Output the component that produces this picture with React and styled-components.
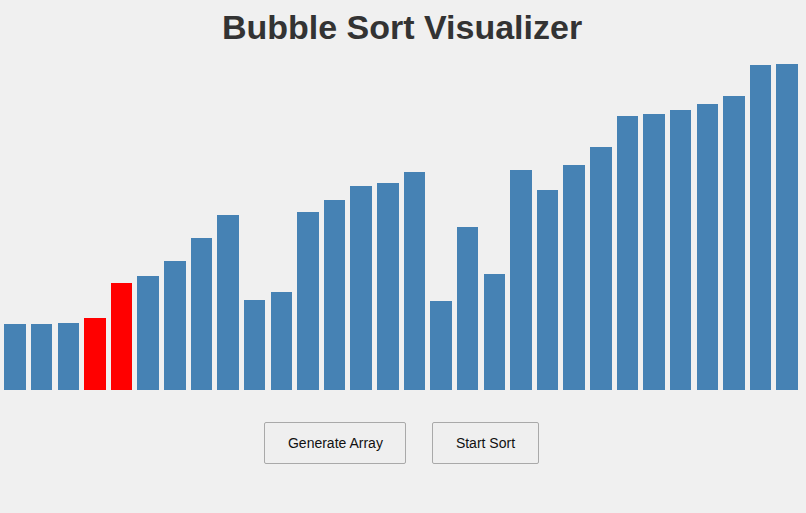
import React from "react";
import styled, { createGlobalStyle } from "styled-components";

const Global = createGlobalStyle`
  html, body { margin: 0; padding: 0; background: #f0f0f0; }
  body { font-family: "Liberation Sans", Arial, sans-serif; }
`;

const Page = styled.div`
  display: flex;
  flex-direction: column;
  align-items: stretch;
  padding-top: 8px;
  width: 806px;
  height: 513px;
  box-sizing: border-box;
`;

const Title = styled.h1`
  margin: 0;
  text-align: center;
  font-size: 34px;
  line-height: 38px;
  font-weight: bold;
  color: #333333;
  padding-right: 2px;
`;

const Bars = styled.div`
  display: flex;
  align-items: flex-end;
  height: 344px;
  padding-left: 4.3px;
  gap: 5.14px;
`;

const Bar = styled.div`
  width: 21.5px;
  flex: none;
  background: ${(p) => (p.$active ? "#ff0000" : "#4682b4")};
`;

const Controls = styled.div`
  display: flex;
  justify-content: center;
  gap: 26px;
  margin-top: 32px;
  padding-right: 3px;
`;

const Button = styled.button`
  height: 41.5px;
  padding: 0 22.5px;
  font-family: "Liberation Sans", Arial, sans-serif;
  font-size: 14px;
  color: #111;
  background: #efefef;
  border: 1px solid #a9a9a9;
  border-radius: 2px;
  cursor: pointer;
`;

const heights = [
  66, 66, 67, 72.5, 107, 114, 129, 152, 175.5, 90, 98, 178, 190, 204.5, 207,
  218, 89.5, 163, 116, 220, 200.5, 225, 243, 274, 276, 280, 286, 294, 325, 326,
];
const active = new Set([3, 4]);

export default function App() {
  return (
    <>
      <Global />
      <Page>
        <Title>Bubble Sort Visualizer</Title>
        <Bars>
          {heights.map((h, i) => (
            <Bar key={i} $active={active.has(i)} style={{ height: `${h}px` }} />
          ))}
        </Bars>
        <Controls>
          <Button>Generate Array</Button>
          <Button>Start Sort</Button>
        </Controls>
      </Page>
    </>
  );
}
